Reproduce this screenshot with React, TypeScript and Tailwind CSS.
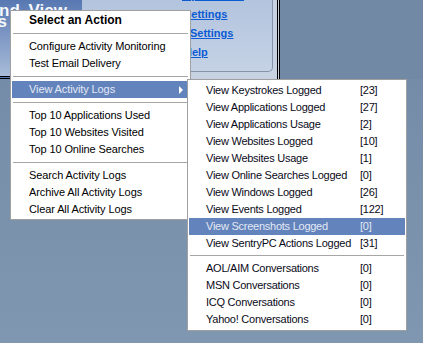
import React from "react";

const mainGroups: string[][] = [
  ["Configure Activity Monitoring", "Test Email Delivery"],
  ["__VIEW__"],
  ["Top 10 Applications Used", "Top 10 Websites Visited", "Top 10 Online Searches"],
  ["Search Activity Logs", "Archive All Activity Logs", "Clear All Activity Logs"],
];

const logRows: [string, string][] = [
  ["View Keystrokes Logged", "[23]"],
  ["View Applications Logged", "[27]"],
  ["View Applications Usage", "[2]"],
  ["View Websites Logged", "[10]"],
  ["View Websites Usage", "[1]"],
  ["View Online Searches Logged", "[0]"],
  ["View Windows Logged", "[26]"],
  ["View Events Logged", "[122]"],
  ["View Screenshots Logged", "[0]"],
  ["View SentryPC Actions Logged", "[31]"],
];

const chatRows: [string, string][] = [
  ["AOL/AIM Conversations", "[0]"],
  ["MSN Conversations", "[0]"],
  ["ICQ Conversations", "[0]"],
  ["Yahoo! Conversations", "[0]"],
];

function Sep({ top = "mt-[4px]" }: { top?: string }) {
  return <div className={`${top} mb-[4px] mx-[2px] h-px bg-[#a6a6a6]`} />;
}

function SubRow({ label, count, active }: { label: string; count: string; active?: boolean }) {
  return (
    <div
      className={`mx-px flex h-[17px] items-center pl-[17px] leading-[17px] tracking-[-0.25px] ${
        active ? "bg-[#6383bc] text-[#e2e9f4]" : "text-[#0a0a18]"
      }`}
    >
      <span className="w-[154px] shrink-0 whitespace-nowrap">{label}</span>
      <span>{count}</span>
    </div>
  );
}

export default function App() {
  return (
    <div className="relative h-[343px] w-[423px] overflow-hidden bg-gradient-to-b from-[#7189a5] to-[#7f97b0] font-['Liberation_Sans',Arial,sans-serif] text-[11px]">
      {/* page header band */}
      <div className="flex h-[79px]">
        <div className="h-full w-[82px] shrink-0 overflow-hidden border-b-[3px] border-double border-black bg-gradient-to-b from-[#5878b2] to-[#a9bcd8] text-[17px] font-bold text-[#f4f7fc]">
          <div className="mt-[2px] flex h-[17px] w-[67px] justify-end whitespace-nowrap leading-[17px] [word-spacing:4px]">
            Record and View
          </div>
          <div className="-mt-[6px] flex h-[17px] w-[7px] justify-end whitespace-nowrap leading-[17px]">
            Activity Logs
          </div>
        </div>
        <div className="flex h-full w-[198px] shrink-0 border-r-[3px] border-double border-black bg-[#c6d1e2]">
          <div className="h-[72px] w-[191px] overflow-hidden rounded-br-[5px] border-b border-r border-[#8593aa] bg-gradient-to-b from-[#b3c4de] to-[#c5d2e5]">
            <div className="-mt-[14px] flex flex-col text-[11px] font-bold leading-[19px] text-[#0b5bd3] underline">
              <span className="pl-[100px] whitespace-nowrap">My Account</span>
              <span className="pl-[102px] whitespace-nowrap">Settings</span>
              <span className="pl-[108px] whitespace-nowrap">Settings</span>
              <span className="pl-[102px] whitespace-nowrap">Help</span>
            </div>
          </div>
        </div>
        <div className="h-full flex-1 bg-[#7189a5]" />
      </div>

      {/* main popup menu */}
      <div className="absolute left-[10px] top-[10px] z-10 w-[181px] border border-[#a0a0a0] bg-white pb-px text-black tracking-[-0.1px]">
        <div className="flex h-[18px] items-center pl-[18px] text-[12px] font-bold leading-[18px] tracking-normal">
          Select an Action
        </div>
        {mainGroups.map((group, gi) => (
          <div key={gi}>
            <Sep />
            {group.map((item) =>
              item === "__VIEW__" ? (
                <div
                  key={item}
                  className="mx-px flex h-[17px] items-center justify-between bg-[#6383bc] pl-[17px] pr-[6px] leading-[17px] text-[#e2e9f4]"
                >
                  <span>View Activity Logs</span>
                  <svg width="4" height="8" viewBox="0 0 4 8">
                    <polygon points="0,0 4,4 0,8" fill="#ffffff" />
                  </svg>
                </div>
              ) : (
                <div key={item} className="flex h-[17px] items-center pl-[18px] leading-[17px]">
                  {item}
                </div>
              )
            )}
          </div>
        ))}
      </div>

      {/* sub menu */}
      <div className="absolute left-[187px] top-[79px] z-20 w-[220px] border border-[#a0a0a0] bg-white pb-[2px] pt-[2px]">
        {logRows.map(([l, c]) => (
          <SubRow key={l} label={l} count={c} active={l === "View Screenshots Logged"} />
        ))}
        <Sep top="mt-[3px]" />
        {chatRows.map(([l, c]) => (
          <SubRow key={l} label={l} count={c} />
        ))}
      </div>
    </div>
  );
}
